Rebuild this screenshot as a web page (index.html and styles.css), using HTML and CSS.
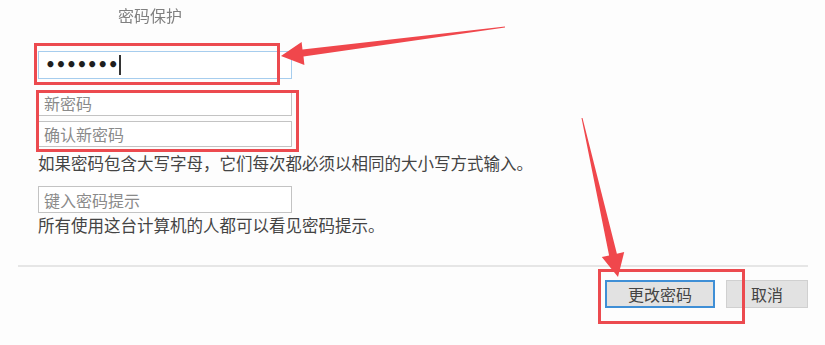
FILE: index.html
```html
<!DOCTYPE html>
<html lang="zh-CN">
<head>
<meta charset="utf-8">
<link rel="stylesheet" href="styles.css">
</head>
<body>
<div class="page">
  <div class="form">
    <div class="title">密码保护</div>
    <div class="field current"><span class="dots">•••••••</span><span class="caret"></span></div>
    <div class="group">
      <div class="field"><span class="ph">新密码</span></div>
      <div class="field"><span class="ph">确认新密码</span></div>
    </div>
    <p class="note first">如果密码包含大写字母，它们每次都必须以相同的大小写方式输入。</p>
    <div class="field hint"><span class="ph">键入密码提示</span></div>
    <p class="note last">所有使用这台计算机的人都可以看见密码提示。</p>
  </div>
  <div class="footer">
    <div class="buttons">
      <button class="btn primary">更改密码</button>
      <button class="btn">取消</button>
    </div>
  </div>
  <svg class="overlay" width="825" height="345" viewBox="0 0 825 345">
    <g fill="none" stroke="#ec4a4f" stroke-width="3">
      <rect x="35.5" y="44.5" width="243" height="39"/>
      <rect x="37.5" y="91.5" width="260" height="59"/>
      <rect x="599.5" y="270.5" width="144" height="52"/>
    </g>
    <g fill="#f0474c">
      <polygon points="281,56 301.6,42 302.5,49.5 505,26.5 505,27.5 303.5,56.5 304.4,65"/>
      <polygon points="618,277 624.2,252.1 616.9,253.7 582.5,118 581.5,118 609.1,255.5 601.8,257.1"/>
    </g>
  </svg>
</div>
</body>
</html>
```
FILE: styles.css
```css
html, body {
  margin: 0;
  padding: 0;
  background: #fdfdfd;
}
body {
  font-family: "Noto Sans CJK SC", "Noto Sans", sans-serif;
  color: #333;
}
.page {
  position: relative;
  width: 825px;
  height: 345px;
  overflow: hidden;
}
.form {
  display: flex;
  flex-direction: column;
  align-items: flex-start;
  padding-left: 38px;
}
.title {
  margin-left: 80px;
  margin-top: 4px;
  height: 22px;
  font-size: 16px;
  line-height: 22px;
  color: #808080;
  filter: blur(0.5px);
}
.field {
  box-sizing: border-box;
  width: 254px;
  height: 25px;
  border: 1px solid #c3c3c3;
  background: #fff;
  display: flex;
  align-items: center;
  padding-left: 5px;
  font-size: 16px;
}
.field.current {
  margin-top: 25px;
  height: 28px;
  border-color: #a6cdee;
  padding-left: 6px;
}
.dots {
  font-family: "DejaVu Sans", sans-serif;
  font-size: 17px;
  font-weight: bold;
  letter-spacing: -0.4px;
  color: #1e1e1e;
}
.caret {
  width: 2px;
  height: 20px;
  background: #333;
  margin-left: 1px;
}
.group {
  margin-top: 11px;
  display: flex;
  flex-direction: column;
  gap: 5px;
}
.group .field {
  height: 26px;
}
.ph {
  color: #8a8a8a;
  line-height: 1;
}
.note {
  margin: 0;
  font-size: 16.5px;
  line-height: 20px;
  color: #444;
  white-space: nowrap;
}
.note.first {
  margin-top: 6px;
}
.field.hint {
  margin-top: 13px;
  height: 27px;
}
.note.last {
  margin-top: 2px;
}
.footer {
  margin: 30px 17px 0 18px;
  border-top: 2px solid #e6e6e6;
}
.buttons {
  display: flex;
  justify-content: flex-end;
  gap: 11px;
  padding-top: 13px;
}
.btn {
  box-sizing: border-box;
  height: 28px;
  width: 82px;
  border: 1px solid #d0d0d0;
  background: #e2e2e2;
  font-family: "Noto Sans CJK SC", "Noto Sans", sans-serif;
  font-size: 16px;
  color: #444;
  padding: 0;
}
.btn.primary {
  width: 110px;
  border: 2px solid #3f8fd6;
}
.overlay {
  position: absolute;
  left: 0;
  top: 0;
  pointer-events: none;
}
```
